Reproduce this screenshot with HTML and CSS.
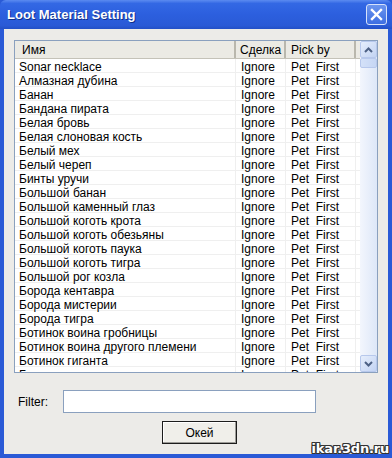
FILE: index.html
```html
<!DOCTYPE html>
<html>
<head>
    <title>Loot Material Setting</title>
    <meta name="viewport" content="width=device-width, initial-scale=1">
    <link rel="stylesheet" href="styles.css">
</head>
<body>
<div class="window">
    <div class="titlebar">
        <span class="title">Loot Material Setting</span>
        <span class="close-btn">
            <svg width="13" height="13" viewBox="0 0 13 13"><path d="M2 2 L11 11 M11 2 L2 11" stroke="#fff" stroke-width="2.4" stroke-linecap="square"/></svg>
        </span>
    </div>
    <div class="client">
        <div class="listview">
            <div class="list-main">
                <div class="list-header">
                    <div class="hcell c-name">Имя</div>
                    <div class="hcell c-deal">Сделка</div>
                    <div class="hcell c-pick">Pick by</div>
                    <div class="hcell c-rest"></div>
                </div>
                <div class="list-body" id="rows"></div>
            </div>
            <div class="scrollbar">
                <div class="sb-btn">
                    <svg width="9" height="6" viewBox="0 0 9 6"><path d="M1 5 L4.5 1.5 L8 5" fill="none" stroke="#4D6185" stroke-width="2"/></svg>
                </div>
                <div class="sb-thumb"></div>
                <div class="sb-track"></div>
                <div class="sb-btn">
                    <svg width="9" height="6" viewBox="0 0 9 6"><path d="M1 1 L4.5 4.5 L8 1" fill="none" stroke="#4D6185" stroke-width="2"/></svg>
                </div>
            </div>
        </div>
        <div class="filter-row">
            <label class="filter-label">Filter:</label>
            <input class="filter-input" type="text">
        </div>
        <div class="button-row">
            <button class="ok-btn">Окей</button>
        </div>
    </div>
    <div class="watermark">ikar.3dn.ru</div>
</div>

<script>
    var items = [
        'Sonar necklace', 'Алмазная дубина', 'Банан', 'Бандана пирата',
        'Белая бровь', 'Белая слоновая кость', 'Белый мех', 'Белый череп',
        'Бинты уручи', 'Большой банан', 'Большой каменный глаз',
        'Большой коготь крота', 'Большой коготь обезьяны', 'Большой коготь паука',
        'Большой коготь тигра', 'Большой рог козла', 'Борода кентавра',
        'Борода мистерии', 'Борода тигра', 'Ботинок воина гробницы',
        'Ботинок воина другого племени', 'Ботинок гиганта', 'Ботинок героя'
    ];

    var body = document.getElementById('rows');
    items.forEach(function (name) {
        var row = document.createElement('div');
        row.className = 'row';
        row.innerHTML =
            '<div class="cell c-name">' + name + '</div>' +
            '<div class="cell c-deal">Ignore</div>' +
            '<div class="cell c-pick">Pet&nbsp; First</div>' +
            '<div class="cell c-rest"></div>';
        body.appendChild(row);
    });
</script>
</body>
</html>
```

FILE: styles.css
```css
body {
    margin: 0;
    font-family: "Liberation Sans", Arial, sans-serif;
    font-size: 12px;
    color: #000;
}
.window {
    position: relative;
    width: 392px;
    height: 458px;
    display: flex;
    flex-direction: column;
    box-sizing: border-box;
    background: #2a5ad6;
    overflow: hidden;
}
.titlebar {
    height: 29px;
    flex: none;
    display: flex;
    align-items: center;
    justify-content: space-between;
    padding: 0 5px 0 7px;
    background: linear-gradient(to bottom, #5b8bf0 0%, #3368e4 12%, #2c5fde 50%, #2a5ad6 88%, #2350c6 100%);
    border-radius: 6px 6px 0 0;
}
.title {
    color: #fff;
    font-family: "Liberation Sans", Arial, sans-serif;
    font-weight: bold;
    font-size: 13px;
    text-shadow: 1px 1px 0 #10308a;
}
.close-btn {
    width: 21px;
    height: 21px;
    box-sizing: border-box;
    display: flex;
    align-items: center;
    justify-content: center;
    border: 1px solid #d6e2fb;
    border-radius: 3px;
    background: linear-gradient(to bottom, #6c95ee, #3d6ee2);
}
.client {
    flex: 1;
    margin: 0 4px 4px 4px;
    background: #ecebe8;
    padding: 11px 10px 0 10px;
    display: flex;
    flex-direction: column;
}
.listview {
    height: 333px;
    box-sizing: border-box;
    border: 1px solid #8aa0be;
    background: #fff;
    display: flex;
    overflow: hidden;
}
.list-main {
    flex: 1;
    overflow: hidden;
}
.list-header, .row {
    display: flex;
}
.list-header {
    height: 17px;
    background: #ebeae4;
    border-bottom: 1px solid #c4c2b8;
}
.hcell {
    box-sizing: border-box;
    line-height: 18px;
    border-right: 2px solid #b9b7ad;
    white-space: nowrap;
}
.hcell.c-rest {
    border-right: none;
}
.c-name { width: 221px; padding-left: 7px; }
.c-deal { width: 50px; padding-left: 4px; }
.c-pick { width: 70px; padding-left: 5px; }
.c-rest { flex: 1; }
.row {
    height: 14px;
}
.cell {
    box-sizing: border-box;
    line-height: 13px;
    padding-top: 2px;
    height: 14px;
    border-bottom: 1px solid #efefef;
    border-right: 1px solid #efefef;
    white-space: nowrap;
}
.cell.c-name { padding-left: 4px; }
.cell.c-deal { padding-left: 5px; }
.cell.c-rest { border-right: none; }
.scrollbar {
    width: 17px;
    flex: none;
    display: flex;
    flex-direction: column;
    background: linear-gradient(to right, #f3f6fd, #dde7f8);
}
.sb-btn {
    height: 17px;
    box-sizing: border-box;
    border: 1px solid #b7c8ec;
    border-radius: 2px;
    background: linear-gradient(to bottom right, #e6eefc, #c2d3f3);
    display: flex;
    align-items: center;
    justify-content: center;
}
.sb-thumb {
    height: 10px;
    box-sizing: border-box;
    border: 1px solid #b7c8ec;
    border-radius: 2px;
    background: linear-gradient(to right, #d4e1f8, #c6d6f4);
}
.sb-track {
    flex: 1;
}
.filter-row {
    display: flex;
    align-items: center;
    margin-top: 17px;
    height: 23px;
}
.filter-label {
    width: 45px;
    padding-left: 4px;
}
.filter-input {
    width: 253px;
    height: 23px;
    box-sizing: border-box;
    border: 1px solid #8aa0be;
    background: #fff;
    margin: 0;
}
.button-row {
    margin-top: 8px;
    display: flex;
}
.ok-btn {
    margin-left: 148px;
    width: 75px;
    height: 23px;
    font-family: "Liberation Sans", Arial, sans-serif;
    font-size: 12px;
    background: #f0efea;
    border: 1px solid #1c1c1c;
    box-shadow: inset -1px -1px 0 #9d9c98, inset 1px 1px 0 #fff;
    padding: 0;
}
.watermark {
    position: absolute;
    right: 3px;
    bottom: 2px;
    color: #fff;
    font-family: "DejaVu Sans", sans-serif;
    font-weight: bold;
    font-size: 13px;
    letter-spacing: -0.2px;
    text-shadow: 1px 0 0 #333, -1px 0 0 #333, 0 1px 0 #333, 0 -1px 0 #333, 1px 1px 0 #333, -1px -1px 0 #333, 1px -1px 0 #333, -1px 1px 0 #333;
}
```
